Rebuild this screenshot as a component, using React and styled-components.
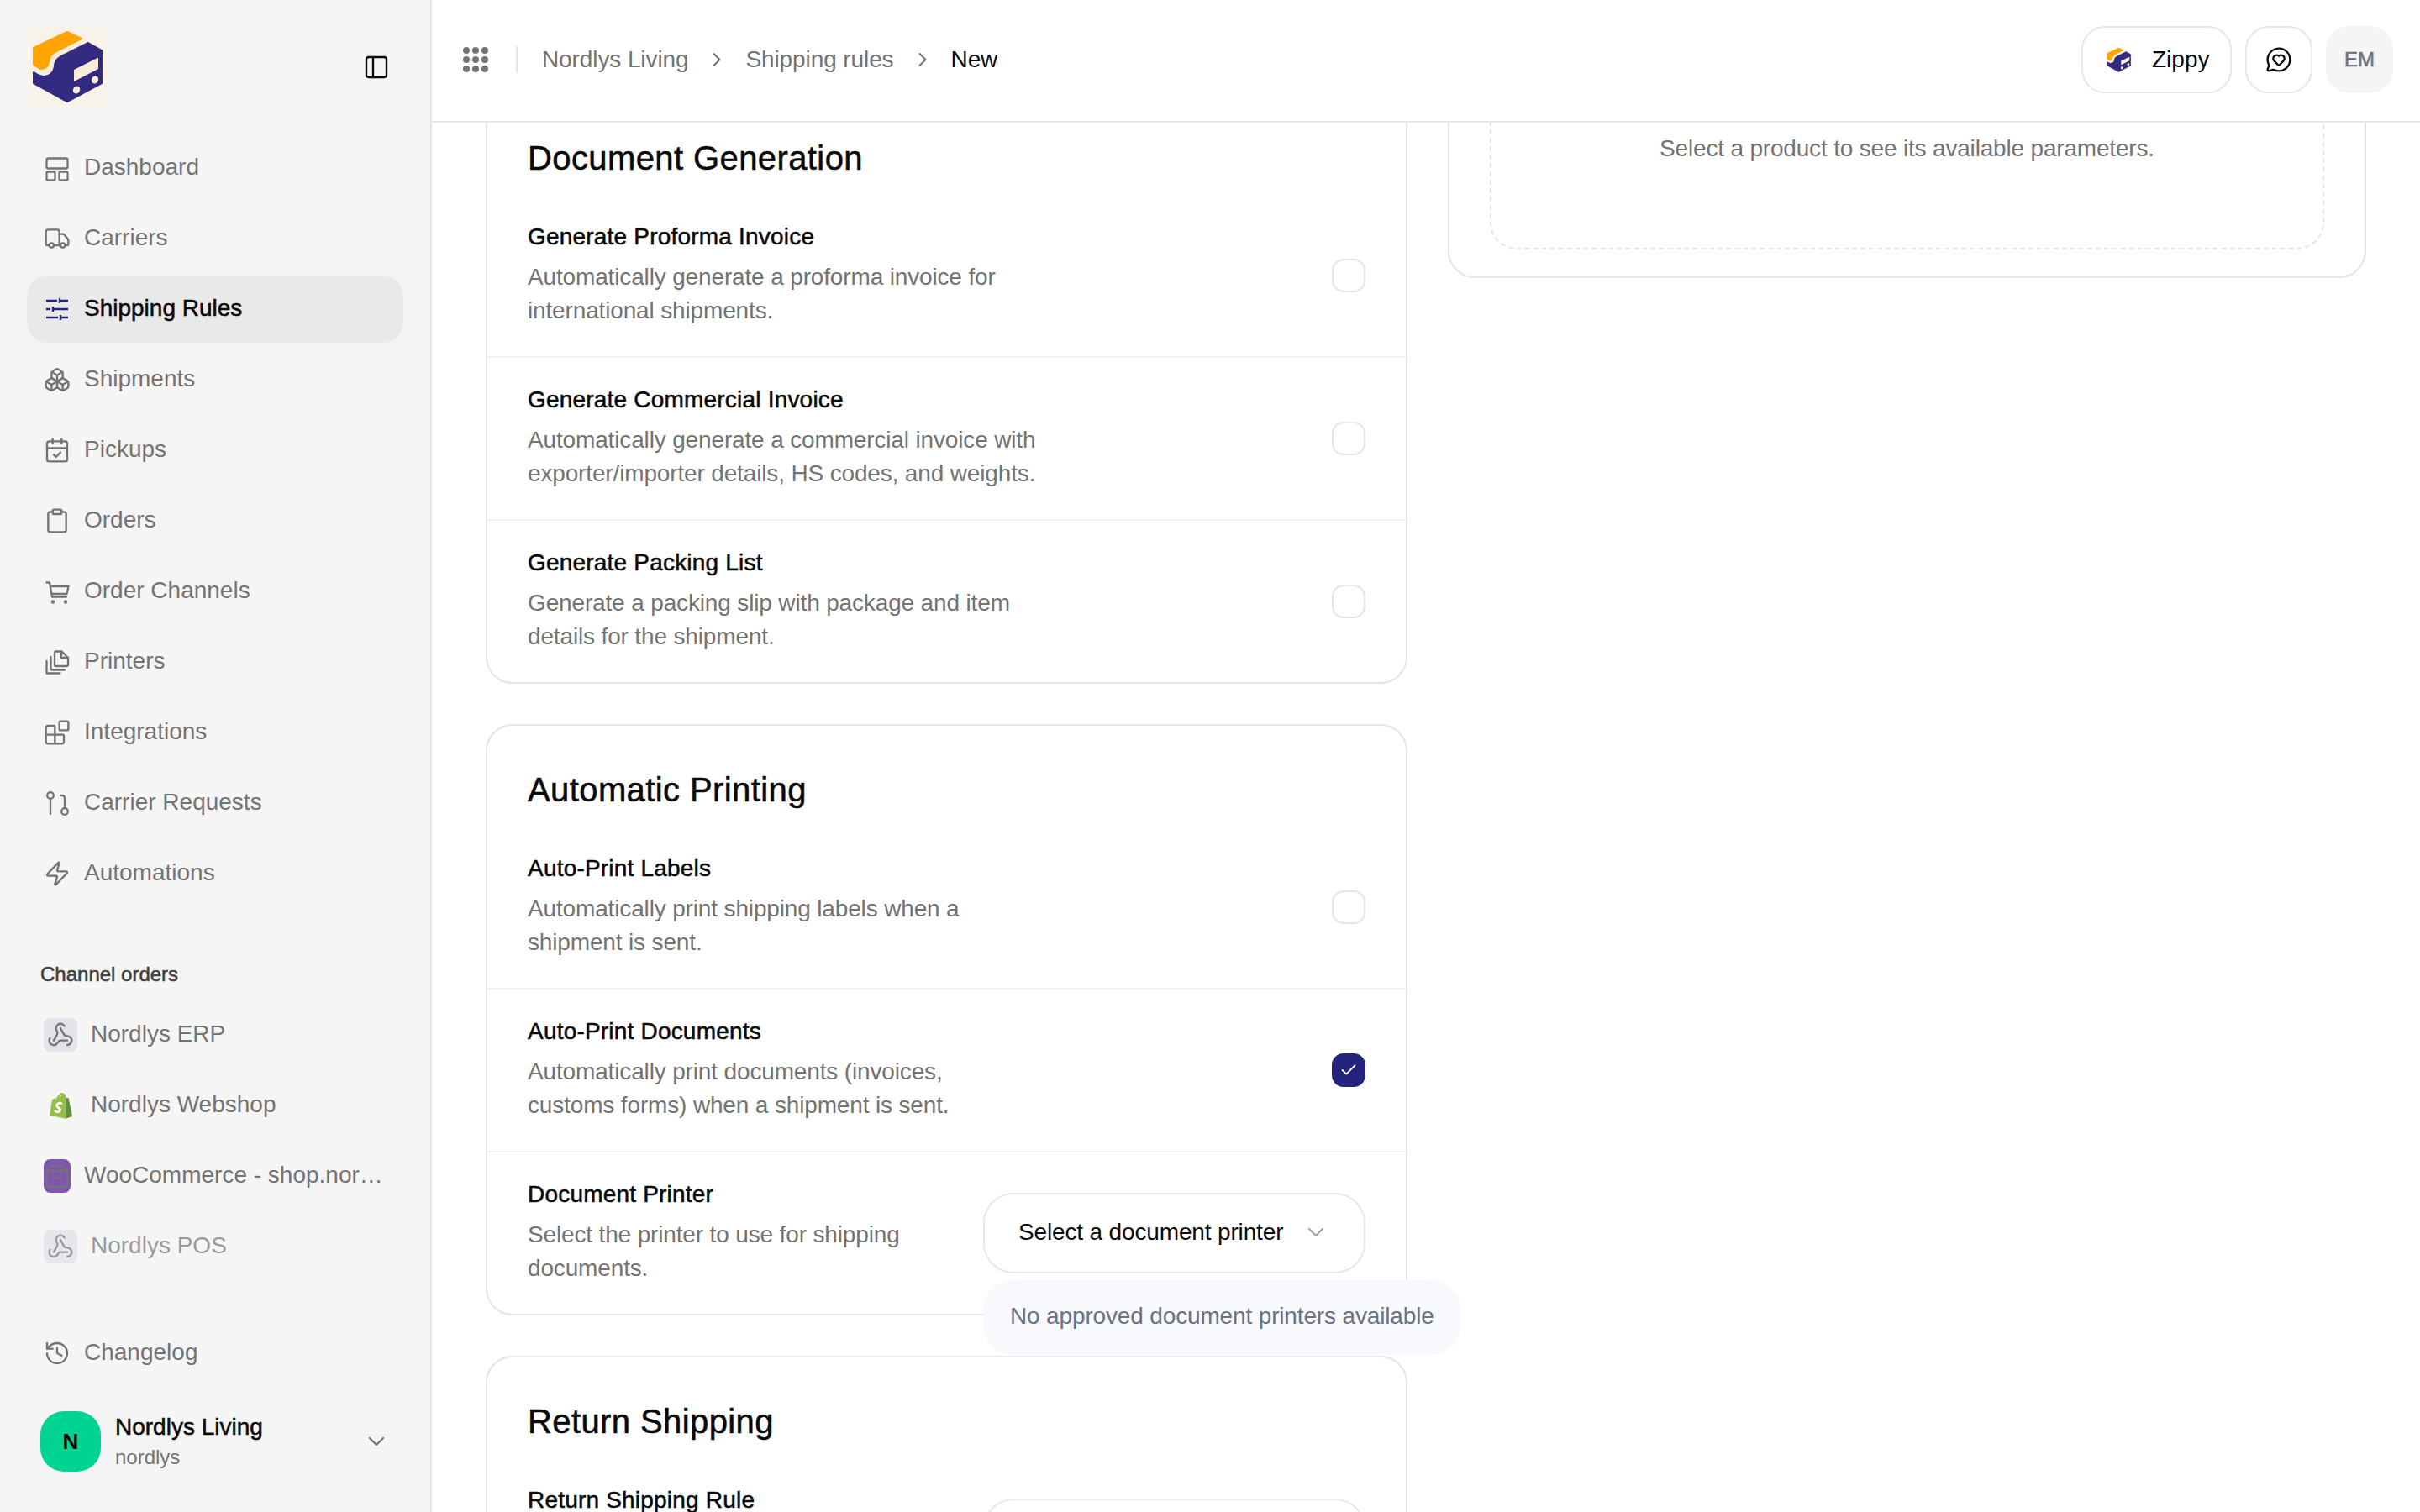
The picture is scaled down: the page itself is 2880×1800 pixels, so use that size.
import React from "react";
import styled, { createGlobalStyle, css } from "styled-components";
import {
  Truck,
  Boxes,
  CalendarCheck,
  Clipboard,
  Blocks,
  Zap,
  History,
  PanelLeft,
  Webhook,
  ChevronRight,
  ChevronDown,
  MessageCircleHeart,
  Check,
} from "lucide-react";

const GlobalStyle = createGlobalStyle`
  html, body, #root { margin: 0; height: 100%; }
  body {
    overflow: hidden;
    background: #fff;
    color: #0a0a0a;
    font-family: "Liberation Sans", Arial, sans-serif;
    font-size: 28px;
  }
  * { box-sizing: border-box; }
`;

// Liberation has no 500 weight, a thin stroke gets close enough
const medium = css`
  -webkit-text-stroke: 0.55px currentColor;
`;

const Page = styled.div`
  display: flex;
  height: 100vh;
`;

const Sidebar = styled.aside`
  flex: 0 0 514px;
  min-width: 0;
  display: flex;
  flex-direction: column;
  padding: 32px 32px 48px;
  background: #f5f5f5;
  border-right: 2px solid #e5e5e5;
`;

const SidebarHead = styled.div`
  display: flex;
  align-items: center;
  justify-content: space-between;
  height: 96px;
  margin-bottom: 32px;
  padding-right: 16px;
`;

const LogoBox = styled.div`
  width: 96px;
  height: 96px;
  background: radial-gradient(circle, #fbe9cc 0%, #f8f3ea 70%, #f7f5f1 100%);
`;

const IconButton = styled.button`
  display: flex;
  padding: 0;
  border: 0;
  background: none;
  color: #0a0a0a;
`;

const Nav = styled.nav`
  display: flex;
  flex-direction: column;
  gap: 4px;
  min-width: 0;
`;

const NavItem = styled.a`
  display: flex;
  align-items: center;
  gap: 16px;
  height: 80px;
  min-width: 0;
  padding: 0 20px;
  border-radius: 24px;
  color: #737373;
  white-space: nowrap;
  background: ${(p) => (p.$active ? "#e9e9e9" : "transparent")};
  ${(p) =>
    p.$active &&
    css`
      color: #0a0a0a;
      ${medium}
      svg {
        color: #24247e;
      }
    `}
  svg {
    flex: none;
  }
`;

const NavLabel = styled.span`
  min-width: 0;
  padding-bottom: 2px;
  overflow: hidden;
  text-overflow: ellipsis;
`;

const SectionLabel = styled.div`
  margin: 64px 0 16px 16px;
  color: #404040;
  font-size: 24px;
  line-height: 32px;
  ${medium}
`;

const ChannelItem = styled(NavItem)`
  opacity: ${(p) => (p.$dim ? 0.7 : 1)};
`;

const ChannelIcon = styled.span`
  flex: none;
  display: flex;
  align-items: center;
  justify-content: center;
  width: ${(p) => (p.$narrow ? 32 : 40)}px;
  height: 40px;
  border-radius: 8px;
  color: #737373;
  background: ${(p) => p.$bg || "transparent"};
`;

const SidebarFoot = styled.div`
  margin-top: auto;
`;

const Account = styled.div`
  display: flex;
  align-items: center;
  gap: 17px;
  margin-top: 29px;
  padding: 0 16px;
`;

const Avatar = styled.div`
  flex: none;
  display: flex;
  align-items: center;
  justify-content: center;
  width: 72px;
  height: 72px;
  border-radius: 28px;
  background: #00d492;
  color: #0a0a0a;
  font-size: 26px;
  font-weight: 700;
`;

const AccountText = styled.div`
  flex: 1;
`;

const AccountName = styled.div`
  line-height: 38px;
  ${medium}
`;

const AccountSlug = styled.div`
  color: #737373;
  font-size: 24px;
  line-height: 34px;
`;

const AccountCaret = styled.span`
  display: flex;
  color: #737373;
`;

const Content = styled.div`
  flex: 1;
  min-width: 0;
  display: flex;
  flex-direction: column;
`;

const Topbar = styled.header`
  flex: 0 0 146px;
  display: flex;
  align-items: center;
  padding: 0 32px 2px 36px;
  background: #fff;
  border-bottom: 2px solid #e5e5e5;
`;

const GridButton = styled.span`
  display: flex;
  color: #737373;
`;

const Separator = styled.span`
  width: 2px;
  height: 32px;
  margin: 0 29px 0 32px;
  background: #e5e5e5;
`;

const Crumbs = styled.div`
  flex: 1;
  display: flex;
  align-items: center;
  gap: 20px;
  color: #737373;
  letter-spacing: -0.1px;
`;

const Crumb = styled.span`
  color: ${(p) => (p.$current ? "#0a0a0a" : "#737373")};
`;

const CrumbArrow = styled.span`
  display: flex;
  color: #737373;
`;

const TopActions = styled.div`
  display: flex;
  align-items: center;
  gap: 16px;
`;

const ZippyButton = styled.button`
  display: flex;
  align-items: center;
  gap: 23px;
  height: 80px;
  width: 179px;
  padding: 0 0 0 26px;
  border: 2px solid #e5e7eb;
  border-radius: 28px;
  background: #fff;
  color: #0a0a0a;
  font: inherit;
`;

const SquareButton = styled.button`
  display: flex;
  align-items: center;
  justify-content: center;
  width: 80px;
  height: 80px;
  padding: 0;
  border: 2px solid #e5e7eb;
  border-radius: 28px;
  background: #fff;
  color: #0a0a0a;
`;

const UserBadge = styled.div`
  display: flex;
  align-items: center;
  justify-content: center;
  width: 80px;
  height: 80px;
  border-radius: 28px;
  background: #f5f5f5;
  color: #737373;
  font-size: 24px;
  ${medium}
`;

const Main = styled.main`
  flex: 1;
  min-height: 0;
  overflow: hidden;
  display: grid;
  grid-template-columns: 1097px 1093px;
  gap: 48px;
  align-items: start;
  padding: 0 64px;
`;

// the page is scrolled, so both columns start above the top bar edge
const LeftColumn = styled.div`
  display: flex;
  flex-direction: column;
  gap: 48px;
  margin-top: -36px;
`;

const Card = styled.section`
  background: #fff;
  border: 2px solid #e5e5e5;
  border-radius: 32px;
`;

const CardTitle = styled.h2`
  margin: 0;
  padding: 48px 48px 16px;
  font-size: 40px;
  font-weight: 400;
  line-height: 56px;
  letter-spacing: 0.4px;
  ${medium}
`;

const Row = styled.div`
  display: flex;
  align-items: center;
  justify-content: space-between;
  gap: 32px;
  padding: 32px 48px;
  border-bottom: 2px solid #f2f2f2;
  &:last-child {
    border-bottom: 0;
  }
`;

const RowText = styled.div`
  flex: 1;
  max-width: 614px;
  margin: -2px 0 2px;
`;

const RowLabel = styled.div`
  margin-bottom: 8px;
  line-height: 40px;
  letter-spacing: 0.2px;
  ${medium}
`;

const RowHint = styled.div`
  color: #737373;
  line-height: 40px;
  letter-spacing: -0.15px;
`;

const CheckBox = styled.span`
  flex: none;
  display: flex;
  align-items: center;
  justify-content: center;
  width: 40px;
  height: 40px;
  border-radius: 14px;
  border: 2px solid ${(p) => (p.$checked ? "#24247e" : "#e5e5e5")};
  background: ${(p) => (p.$checked ? "#24247e" : "#fff")};
  color: #fff;
`;

const SelectWrap = styled.div`
  position: relative;
  flex: none;
`;

const SelectBox = styled.div`
  display: flex;
  align-items: center;
  justify-content: space-between;
  width: 455px;
  height: 96px;
  padding: 0 41px 2px 40px;
  border: 2px solid #e5e7eb;
  border-radius: 36px;
  background: #fff;
  color: #0a0a0a;
  letter-spacing: -0.15px;
  svg {
    color: #a3a3a3;
  }
`;

const SelectNote = styled.div`
  position: absolute;
  top: calc(100% + 8px);
  left: 0;
  z-index: 2;
  height: 89px;
  padding: 0 32px;
  border-radius: 36px;
  background: #f8f9fc;
  color: #6b7280;
  line-height: 85px;
  letter-spacing: -0.15px;
  white-space: nowrap;
`;

const ParamsCard = styled(Card)`
  margin-top: -80px;
  padding: 48px 48px 32px;
`;

const ParamsEmpty = styled.div`
  height: 181px;
  padding-top: 39px;
  border: 2px dashed #e5e5e5;
  border-radius: 32px;
  color: #737373;
  line-height: 40px;
  letter-spacing: -0.18px;
  text-align: center;
`;

const LogoMark = ({ size }) => (
  <svg width={size} height={size} viewBox="0 0 96 96">
    <path
      d="M48 6 L65 14 L35 29 Q27 33 26 42 Q25 50 16 50 L8 45 L8 25 Z"
      fill="#ffa400"
      stroke="#ffa400"
      strokeWidth="2"
      strokeLinejoin="round"
    />
    <path
      d="M73 19 L89 28 L89 67 L48 89 L8 67 L8 54 Q13 58 19 59 Q31 59 33 47 Q33 40 39 36 Z"
      fill="#332b82"
      stroke="#332b82"
      strokeWidth="2"
      strokeLinejoin="round"
    />
    <path d="M56 51 L84 37 Q85 36 85 38 L85 50 L56 65 Z" fill="#f9ecd8" />
    <ellipse cx="59" cy="75" rx="4" ry="4.6" transform="rotate(30 59 75)" fill="#f9ecd8" />
    <ellipse cx="81" cy="63" rx="4" ry="4.6" transform="rotate(30 81 63)" fill="#f9ecd8" />
  </svg>
);

const DashboardIcon = () => (
  <svg width="32" height="32" viewBox="0 0 32 32" fill="none" stroke="currentColor" strokeWidth="2.3">
    <rect x="3.5" y="4.5" width="25" height="12" rx="2" />
    <rect x="3.5" y="20.5" width="10" height="10" rx="1.5" />
    <rect x="18.5" y="20.5" width="10" height="10" rx="1.5" />
  </svg>
);

const RulesIcon = () => (
  <svg width="32" height="32" viewBox="0 0 32 32" fill="none" stroke="currentColor" strokeWidth="2.4">
    <path d="M3 6h13M19 6h10M19 3v6" />
    <path d="M3 16h5M11 16h18M11 13v6" />
    <path d="M3 26h14M20 26h9M20 23v6" />
  </svg>
);

const CartIcon = () => (
  <svg width="32" height="32" viewBox="0 0 32 32" fill="none" stroke="currentColor" strokeWidth="2.3" strokeLinejoin="round" strokeLinecap="round">
    <path d="M3.500 5.500H7l3 17h17" />
    <path d="M8 10h21.500l-2 9H9.500" />
    <circle cx="11" cy="28.500" r="2.200" fill="currentColor" stroke="none" />
    <circle cx="26" cy="28.500" r="2.200" fill="currentColor" stroke="none" />
  </svg>
);

const PrintersIcon = () => (
  <svg width="32" height="32" viewBox="0 0 32 32" fill="none" stroke="currentColor" strokeWidth="2.3" strokeLinejoin="round" strokeLinecap="round">
    <path d="M13 20V5.5A2 2 0 0 1 15 3.500h6.500L29 11v8a2 2 0 0 1-2 2H14z" />
    <path d="M21 4v7h8" />
    <path d="M8.500 10v14a1.500 1.500 0 0 0 1.500 1.500h15" />
    <path d="M3.500 15v14.500h16" />
  </svg>
);

const RequestsIcon = () => (
  <svg width="32" height="32" viewBox="0 0 32 32" fill="none" stroke="currentColor" strokeWidth="2.3" strokeLinecap="round">
    <circle cx="8" cy="7" r="3.800" />
    <path d="M8 11v18" />
    <circle cx="25" cy="26" r="3.800" />
    <path d="M25 22V10a3 3 0 0 0-3-3h-2" />
  </svg>
);

const GridDots = () => (
  <svg width="32" height="32" viewBox="0 0 32 32" fill="currentColor">
    {[5, 16, 27].map((y) =>
      [5, 16, 27].map((x) => <circle key={`${x}-${y}`} cx={x} cy={y} r="4" />)
    )}
  </svg>
);

const ShopifyIcon = () => (
  <svg width="28" height="32" viewBox="0 0 28 32">
    <path d="M1 27.500 L4 9 L10 6.500 Q12 1 16 1 L19.500 2.500 L20.500 7 L20.500 32 Z" fill="#95bf47" />
    <path d="M20.500 7 L23.500 7 L28 29 L20.500 31.500 Z" fill="#5e8e3e" />
    <path d="M8 9 Q10 3 14 2.500 M13 7 Q14 3.500 16.500 3.500" fill="none" stroke="#e5f0c8" strokeWidth="0.9" />
    <path
      d="M15 13.500 Q11 12.500 9.800 15 Q9 17 11.500 18.500 Q14 20 13.500 22 Q12.500 24.500 8 23"
      fill="none"
      stroke="#fff"
      strokeWidth="2.800"
      strokeLinecap="round"
    />
  </svg>
);

const WooIcon = () => (
  <svg width="28" height="32" viewBox="0 0 28 32" fill="none" stroke="#737373" strokeWidth="2.300" strokeLinecap="round" strokeLinejoin="round">
    <path d="M2 10 L6 3.500 H22 L26 10 V27 A2 2 0 0 1 24 29 H4 A2 2 0 0 1 2 27 Z" />
    <path d="M2 10 H26" />
    <path d="M9.500 15 A4.500 4.500 0 0 0 18.500 15" />
  </svg>
);

const navItems = [
  { label: "Dashboard", icon: <DashboardIcon /> },
  { label: "Carriers", icon: <Truck size={32} strokeWidth={1.75} /> },
  { label: "Shipping Rules", icon: <RulesIcon />, active: true },
  { label: "Shipments", icon: <Boxes size={32} strokeWidth={1.75} /> },
  { label: "Pickups", icon: <CalendarCheck size={32} strokeWidth={1.75} /> },
  { label: "Orders", icon: <Clipboard size={32} strokeWidth={1.75} /> },
  { label: "Order Channels", icon: <CartIcon /> },
  { label: "Printers", icon: <PrintersIcon /> },
  { label: "Integrations", icon: <Blocks size={32} strokeWidth={1.75} /> },
  { label: "Carrier Requests", icon: <RequestsIcon /> },
  { label: "Automations", icon: <Zap size={32} strokeWidth={1.75} /> },
];

const SettingRow = ({ label, hint, checked }) => (
  <Row>
    <RowText>
      <RowLabel>{label}</RowLabel>
      <RowHint>{hint}</RowHint>
    </RowText>
    <CheckBox $checked={checked}>{checked && <Check size={22} strokeWidth={2} />}</CheckBox>
  </Row>
);

const App = () => (
  <Page>
    <GlobalStyle />
    <Sidebar>
      <SidebarHead>
        <LogoBox>
          <LogoMark size={96} />
        </LogoBox>
        <IconButton>
          <PanelLeft size={32} strokeWidth={1.75} />
        </IconButton>
      </SidebarHead>
      <Nav>
        {navItems.map((item) => (
          <NavItem key={item.label} $active={item.active}>
            {item.icon}
            <NavLabel>{item.label}</NavLabel>
          </NavItem>
        ))}
      </Nav>
      <SectionLabel>Channel orders</SectionLabel>
      <Nav>
        <ChannelItem>
          <ChannelIcon $bg="#e1e2ea">
            <Webhook size={32} strokeWidth={1.75} />
          </ChannelIcon>
          <NavLabel>Nordlys ERP</NavLabel>
        </ChannelItem>
        <ChannelItem>
          <ChannelIcon>
            <ShopifyIcon />
          </ChannelIcon>
          <NavLabel>Nordlys Webshop</NavLabel>
        </ChannelItem>
        <ChannelItem>
          <ChannelIcon $narrow $bg="#7f54b3">
            <WooIcon />
          </ChannelIcon>
          <NavLabel>WooCommerce - shop.nordlys.com</NavLabel>
        </ChannelItem>
        <ChannelItem $dim>
          <ChannelIcon $bg="#e1e2ea">
            <Webhook size={32} strokeWidth={1.75} />
          </ChannelIcon>
          <NavLabel>Nordlys POS</NavLabel>
        </ChannelItem>
      </Nav>
      <SidebarFoot>
        <NavItem>
          <History size={32} strokeWidth={1.75} />
          <NavLabel>Changelog</NavLabel>
        </NavItem>
        <Account>
          <Avatar>N</Avatar>
          <AccountText>
            <AccountName>Nordlys Living</AccountName>
            <AccountSlug>nordlys</AccountSlug>
          </AccountText>
          <AccountCaret>
            <ChevronDown size={32} strokeWidth={1.75} />
          </AccountCaret>
        </Account>
      </SidebarFoot>
    </Sidebar>

    <Content>
      <Topbar>
        <GridButton>
          <GridDots />
        </GridButton>
        <Separator />
        <Crumbs>
          <Crumb>Nordlys Living</Crumb>
          <CrumbArrow>
            <ChevronRight size={28} strokeWidth={1.75} />
          </CrumbArrow>
          <Crumb>Shipping rules</Crumb>
          <CrumbArrow>
            <ChevronRight size={28} strokeWidth={1.75} />
          </CrumbArrow>
          <Crumb $current>New</Crumb>
        </Crumbs>
        <TopActions>
          <ZippyButton>
            <LogoMark size={33} />
            Zippy
          </ZippyButton>
          <SquareButton>
            <MessageCircleHeart size={32} strokeWidth={1.75} />
          </SquareButton>
          <UserBadge>EM</UserBadge>
        </TopActions>
      </Topbar>

      <Main>
        <LeftColumn>
          <Card>
            <CardTitle>Document Generation</CardTitle>
            <SettingRow
              label="Generate Proforma Invoice"
              hint="Automatically generate a proforma invoice for international shipments."
            />
            <SettingRow
              label="Generate Commercial Invoice"
              hint="Automatically generate a commercial invoice with exporter/importer details, HS codes, and weights."
            />
            <SettingRow
              label="Generate Packing List"
              hint="Generate a packing slip with package and item details for the shipment."
            />
          </Card>

          <Card>
            <CardTitle>Automatic Printing</CardTitle>
            <SettingRow
              label="Auto-Print Labels"
              hint="Automatically print shipping labels when a shipment is sent."
            />
            <SettingRow
              label="Auto-Print Documents"
              hint={
                <>
                  Automatically print documents (invoices,
                  <br />
                  customs forms) when a shipment is sent.
                </>
              }
              checked
            />
            <Row>
              <RowText>
                <RowLabel>Document Printer</RowLabel>
                <RowHint>Select the printer to use for shipping documents.</RowHint>
              </RowText>
              <SelectWrap>
                <SelectBox>
                  Select a document printer
                  <ChevronDown size={32} strokeWidth={1.75} />
                </SelectBox>
                <SelectNote>No approved document printers available</SelectNote>
              </SelectWrap>
            </Row>
          </Card>

          <Card>
            <CardTitle>Return Shipping</CardTitle>
            <Row>
              <RowText>
                <RowLabel>Return Shipping Rule</RowLabel>
                <RowHint>Select the rule to use for return shipments.</RowHint>
              </RowText>
              <SelectWrap>
                <SelectBox>
                  Select a return rule
                  <ChevronDown size={32} strokeWidth={1.75} />
                </SelectBox>
              </SelectWrap>
            </Row>
          </Card>
        </LeftColumn>

        <ParamsCard>
          <ParamsEmpty>Select a product to see its available parameters.</ParamsEmpty>
        </ParamsCard>
      </Main>
    </Content>
  </Page>
);

export default App;
